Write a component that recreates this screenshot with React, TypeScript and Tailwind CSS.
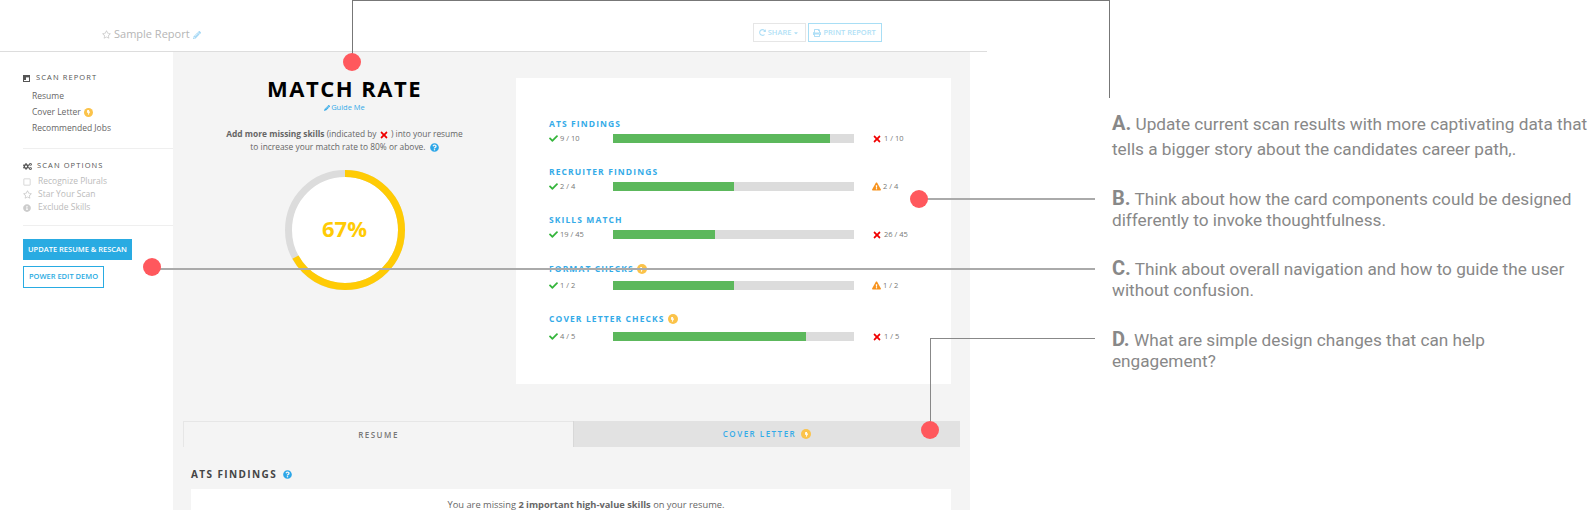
import {
  FaBolt,
  FaCaretDown,
  FaCheck,
  FaCogs,
  FaExclamationTriangle,
  FaInfoCircle,
  FaPencilAlt,
  FaPrint,
  FaQuestionCircle,
  FaRedoAlt,
  FaRegSquare,
  FaRegStar,
  FaTimes,
} from "react-icons/fa";

type Finding = {
  title: string;
  bolt?: boolean;
  good: string;
  bad: string;
  warn?: boolean;
  pct: number;
  mt: string;
  gap: string;
};

const findings: Finding[] = [
  { title: "ATS FINDINGS", good: "9 / 10", bad: "1 / 10", pct: 90, mt: "mt-0", gap: "mt-[5px]" },
  { title: "RECRUITER FINDINGS", good: "2 / 4", bad: "2 / 4", warn: true, pct: 50, mt: "mt-[24px]", gap: "mt-[5px]" },
  { title: "SKILLS MATCH", good: "19 / 45", bad: "26 / 45", pct: 42.4, mt: "mt-[24px]", gap: "mt-[5px]" },
  { title: "FORMAT CHECKS", bolt: true, good: "1 / 2", bad: "1 / 2", warn: true, pct: 50, mt: "mt-[25px]", gap: "mt-[7px]" },
  { title: "COVER LETTER CHECKS", bolt: true, good: "4 / 5", bad: "1 / 5", pct: 80, mt: "mt-[24px]", gap: "mt-[8px]" },
];

function Bolt({ size = "w-[9px] h-[9px]" }: { size?: string }) {
  return (
    <span className={`inline-flex items-center justify-center rounded-full bg-[#fbc34a] text-white ${size}`}>
      <FaBolt className="text-[5px]" />
    </span>
  );
}

function FindingRow({ item }: { item: Finding }) {
  return (
    <div className={item.mt}>
      <div className="flex h-[10px] items-center gap-[3px] text-[8.5px] leading-[10px] font-bold tracking-[1.1px] text-[#35abe8]">
        {item.title}
        {item.bolt && <Bolt size="w-[10px] h-[10px]" />}
      </div>
      <div className={`flex h-[9px] items-center ${item.gap}`}>
        <div className="flex w-[64px] items-center gap-[2px] text-[7.5px] text-[#777]">
          <FaCheck className="text-[9px] text-[#35b53c]" />
          {item.good}
        </div>
        <div className="h-[9px] w-[241px] bg-[#dcdcdc]">
          <div className="h-full bg-[#5cb85c]" style={{ width: `${item.pct}%` }} />
        </div>
        <div className="ml-[18px] flex items-center gap-[2px] text-[7.5px] text-[#777]">
          {item.warn ? (
            <FaExclamationTriangle className="text-[9px] text-[#f7931e]" />
          ) : (
            <FaTimes className="text-[10px] text-[#f00000]" />
          )}
          {item.bad}
        </div>
      </div>
    </div>
  );
}

function Gauge() {
  return (
    <div className="relative mx-auto mt-[17px] h-[120px] w-[120px]">
      <svg viewBox="0 0 120 120" className="h-full w-full -rotate-90">
        <circle cx="60" cy="60" r="56.5" fill="#fff" stroke="#dcdcdc" strokeWidth="7" />
        <circle
          cx="60"
          cy="60"
          r="56.5"
          fill="none"
          stroke="#ffcb05"
          strokeWidth="7"
          pathLength="100"
          strokeDasharray="67 33"
        />
      </svg>
      <div className="absolute inset-0 flex items-center justify-center pb-[3px] text-[22px] font-bold text-[#ffcb05]">
        67%
      </div>
    </div>
  );
}

function Sidebar() {
  return (
    <aside className="w-[173px] shrink-0 pt-[20px] pl-[23px] text-[#666]">
      <div className="flex h-[12px] items-center gap-[6px] text-[7.5px] tracking-[1.1px] text-[#555]">
        <svg viewBox="0 0 7 7" className="h-[7px] w-[7px]">
          <rect x="0.5" y="0.5" width="6" height="6" fill="none" stroke="#555" />
          <rect x="1" y="1" width="5" height="1.4" fill="#555" />
          <rect x="1" y="2" width="2" height="3" fill="#555" />
        </svg>
        SCAN REPORT
      </div>
      <div className="mt-[4px] flex h-[16px] items-center pl-[9px] text-[8.5px]">Resume</div>
      <div className="flex h-[16px] items-center gap-[3px] pl-[9px] text-[8.5px]">
        Cover Letter <Bolt />
      </div>
      <div className="flex h-[16px] items-center pl-[9px] text-[8.5px]">Recommended Jobs</div>
      <div className="mt-[12px] h-px bg-[#efefef]" />
      <div className="mt-[11px] flex h-[12px] items-center gap-[5px] text-[7.5px] tracking-[1.1px] text-[#555]">
        <FaCogs className="text-[9px]" />
        SCAN OPTIONS
      </div>
      <div className="mt-[3px] text-[8.5px] text-[#bbb]">
        <div className="flex h-[13px] items-center gap-[7px]">
          <FaRegSquare className="text-[8px] text-[#ccc]" />
          Recognize Plurals
        </div>
        <div className="flex h-[13px] items-center gap-[6px]">
          <FaRegStar className="text-[9px] text-[#ccc]" />
          Star Your Scan
        </div>
        <div className="flex h-[13px] items-center gap-[7px]">
          <FaInfoCircle className="text-[8px] text-[#ccc]" />
          Exclude Skills
        </div>
      </div>
      <div className="mt-[11px] h-px bg-[#efefef]" />
      <div className="mt-[13px] flex h-[21px] w-[109px] items-center justify-center bg-[#29abe2] text-[7.5px] font-semibold text-white">
        UPDATE RESUME &amp; RESCAN
      </div>
      <div className="mt-[6px] flex h-[22px] w-[81px] items-center justify-center border border-[#29abe2] text-[7.5px] font-semibold text-[#29abe2]">
        POWER EDIT DEMO
      </div>
    </aside>
  );
}

function MainPanel() {
  return (
    <main className="w-[797px] shrink-0 bg-[#f4f4f4]">
      <div className="flex pt-[26px]">
        <div className="w-[343px] text-center">
          <div className="h-[21px] text-[22px] leading-[21px] font-bold tracking-[1.5px] text-black">MATCH RATE</div>
          <div className="mt-[4px] flex h-[9px] items-center justify-center gap-[1px] text-[7.5px] text-[#35abe8]">
            <FaPencilAlt className="text-[6px]" />
            Guide Me
          </div>
          <div className="mt-[15px] text-[8.4px] leading-[13px] text-[#666]">
            <div>
              <b className="font-bold">Add more missing skills</b> (indicated by{" "}
              <FaTimes className="inline text-[10px] text-[#f00000]" /> ) into your resume
            </div>
            <div>
              to increase your match rate to 80% or above.{" "}
              <FaQuestionCircle className="ml-[2px] inline text-[9px] text-[#2ba6e8]" />
            </div>
          </div>
          <Gauge />
        </div>
        <div className="h-[306px] w-[435px] bg-white pt-[41px] pl-[33px]">
          {findings.map((item) => (
            <FindingRow key={item.title} item={item} />
          ))}
        </div>
      </div>
      <div className="mt-[37px] ml-[10px] flex h-[26px] w-[777px] text-[8px] tracking-[1.5px]">
        <div className="flex w-[390px] items-center justify-center border-t border-l border-[#e6e6e6] font-semibold text-[#777]">
          RESUME
        </div>
        <div className="flex flex-1 items-center justify-center gap-[5px] border-l border-[#d8d8d8] bg-[#e2e2e2] font-semibold text-[#35abe8]">
          COVER LETTER <Bolt size="w-[10px] h-[10px]" />
        </div>
      </div>
      <div className="mt-[21px] ml-[18px] flex h-[12px] items-center gap-[6px] text-[10px] font-bold tracking-[1.4px] text-[#444]">
        ATS FINDINGS
        <FaQuestionCircle className="text-[9px] text-[#2ba6e8]" />
      </div>
      <div className="mt-[9px] ml-[18px] h-[30px] w-[760px] bg-white pt-[9px] pl-[30px] text-center text-[9.3px] text-[#666]">
        You are missing <b className="font-bold">2 important high-value skills</b> on your resume.
      </div>
    </main>
  );
}

function Note({ letter, text, className }: { letter: string; text: React.ReactNode; className: string }) {
  return (
    <p className={className}>
      <b className="text-[20px] font-bold">{letter}</b> {text}
    </p>
  );
}

function Notes() {
  return (
    <section className="w-[480px] pt-[111px] text-[17.2px] text-[#888]" style={{ fontFamily: "Roboto, sans-serif" }}>
      <Note
        letter="A."
        className="leading-[25px] whitespace-nowrap"
        text={
          <>
            Update current scan results with more captivating data that
            <br />
            tells a bigger story about the candidates career path,.
          </>
        }
      />
      <Note
        letter="B."
        className="mt-[26px] leading-[21px] whitespace-nowrap"
        text={
          <>
            Think about how the card components could be designed
            <br />
            differently to invoke thoughtfulness.
          </>
        }
      />
      <Note
        letter="C."
        className="mt-[27px] leading-[21px] whitespace-nowrap"
        text={
          <>
            Think about overall navigation and how to guide the user
            <br />
            without confusion.
          </>
        }
      />
      <Note
        letter="D."
        className="mt-[28px] leading-[21px] whitespace-nowrap"
        text={
          <>
            What are simple design changes that can help
            <br />
            engagement?
          </>
        }
      />
    </section>
  );
}

function Dot({ className }: { className: string }) {
  return <div className={`absolute h-[18px] w-[18px] rounded-full bg-[#ff585d] ${className}`} />;
}

export default function App() {
  return (
    <div
      className="relative flex h-[510px] w-[1591px] overflow-hidden bg-white"
      style={{ fontFamily: '"Open Sans", sans-serif' }}
    >
      <div className="w-[987px] shrink-0">
        <header className="flex h-[52px] items-center border-b border-[#ddd] pt-[18px]">
          <div className="ml-[102px] flex items-center gap-[3px] text-[11px] text-[#b5b5b5]">
            <FaRegStar className="text-[9px] text-[#ccc]" />
            Sample Report
            <FaPencilAlt className="text-[8px] text-[#a5d8f5]" />
          </div>
          <div className="ml-[552px] flex -translate-y-[2px] gap-[2px] text-[7.5px] font-semibold text-[#b0dff6]">
            <div className="flex h-[19px] w-[53px] items-center justify-center gap-[2px] border border-[#e6e6e6]">
              <FaRedoAlt className="text-[7px]" /> SHARE <FaCaretDown className="text-[6px]" />
            </div>
            <div className="flex h-[19px] w-[74px] items-center justify-center gap-[2px] border border-[#a8def5]">
              <FaPrint className="text-[8px]" /> PRINT REPORT
            </div>
          </div>
        </header>
        <div className="flex h-[458px]">
          <Sidebar />
          <MainPanel />
        </div>
      </div>
      <div className="ml-[125px]">
        <Notes />
      </div>

      {/* annotation lines */}
      <div className="absolute top-0 left-[352px] h-[62px] w-[757px] border-t border-l border-[#777]" />
      <div className="absolute top-0 left-[1109px] h-[98px] w-px bg-[#777]" />
      <div className="absolute top-[198px] left-[919px] h-[2px] w-[176px] bg-[#aaa]" />
      <div className="absolute top-[268px] left-[152px] h-[2px] w-[943px] bg-[#aaa]" />
      <div className="absolute top-[338px] left-[930px] h-[92px] w-[165px] border-t border-l border-[#888]" />
      <Dot className="top-[53px] left-[343px]" />
      <Dot className="top-[258px] left-[143px]" />
      <Dot className="top-[190px] left-[910px]" />
      <Dot className="top-[421px] left-[921px]" />
    </div>
  );
}
